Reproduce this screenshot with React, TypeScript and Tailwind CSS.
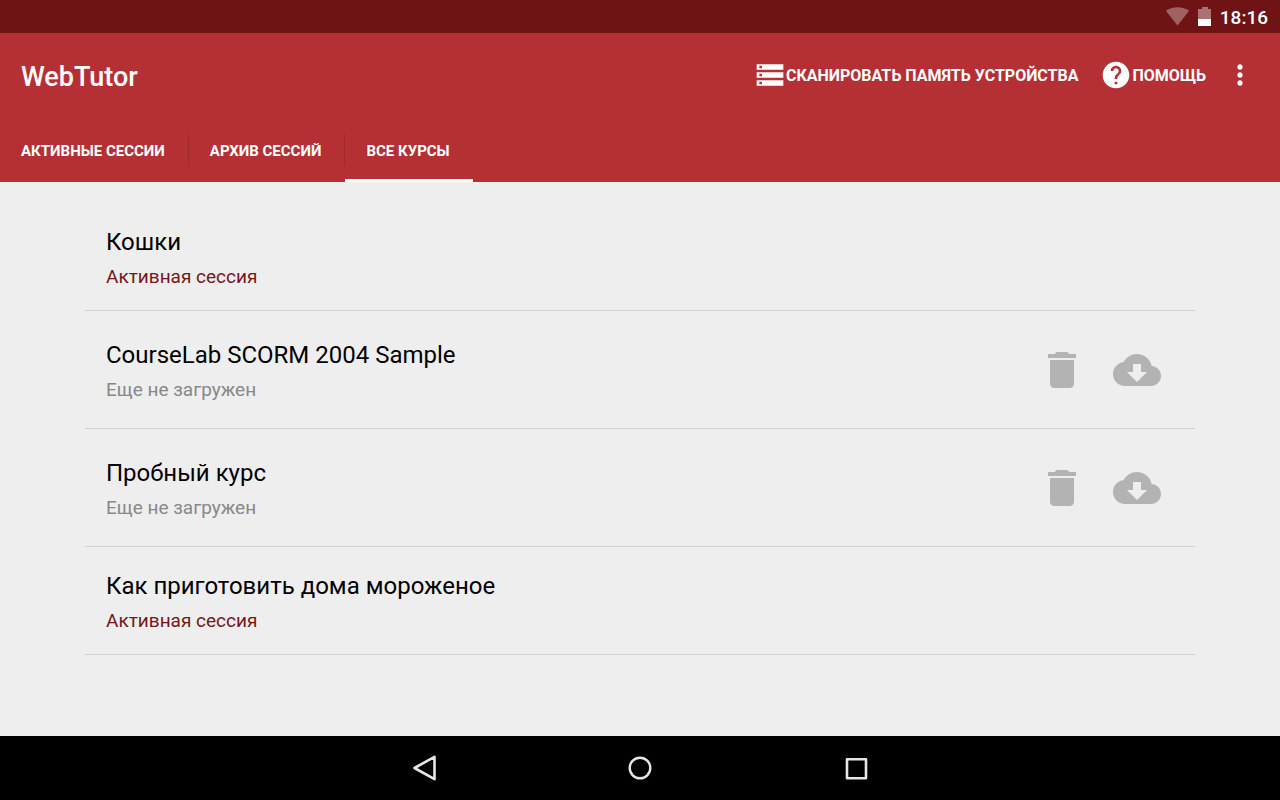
import { clsx } from "clsx"
import { useState } from "react"

type Course = {
  title: string
  status: "active" | "notLoaded"
}

const tabs = ["Активные сессии", "Архив сессий", "Все курсы"]

const courses: Course[] = [
  { title: "Кошки", status: "active" },
  { title: "CourseLab SCORM 2004 Sample", status: "notLoaded" },
  { title: "Пробный курс", status: "notLoaded" },
  { title: "Как приготовить дома мороженое", status: "active" },
]

const StatusBar = () => (
  <div className="flex h-[33px] items-center justify-end bg-[#701314] px-3 text-white">
    <svg viewBox="0 0 24 20" className="mr-2 h-5 w-6" fill="#a06162">
      <path d="M11.500 18.500 0 4C3 1.500 7 0.300 11.500 0.300s8.500 1.200 11.500 3.700z" />
    </svg>
    <svg viewBox="0 0 14 20" className="mr-2 h-5 w-3.5">
      <path d="M4 0h6v2h3v11H0V2h4z" fill="#a97172" />
      <path d="M0 12h13v7H0z" fill="#fff" />
    </svg>
    <span className="pt-0.5 text-[19px] leading-6 font-medium">18:16</span>
  </div>
)

const Toolbar = () => (
  <div className="flex h-[84px] items-center pr-6 pl-[21px]">
    <h1 className="grow pt-1 text-[27px] leading-9 font-medium">WebTutor</h1>

    <div className="flex items-center gap-[22px] text-base font-bold">
      <button type="button" className="flex items-center uppercase">
        <svg viewBox="0 0 24 24" className="size-8" fill="currentColor">
          <path d="M2 20h20v-4H2v4zm2-3h2v2H4v-2zM2 4v4h20V4H2zm4 3H4V5h2v2zm-4 7h20v-4H2v4zm2-3h2v2H4v-2z" />
        </svg>
        <span className="pt-0.5">Сканировать память устройства</span>
      </button>
      <button type="button" className="flex items-center uppercase">
        <svg viewBox="0 0 24 24" className="size-8" fill="currentColor">
          <path d="M12 2C6.480 2 2 6.480 2 12s4.480 10 10 10 10-4.480 10-10S17.520 2 12 2zm1 17h-2v-2h2v2zm2.070-7.750l-.9.920C13.450 12.900 13 13.500 13 15h-2v-.5c0-1.100.450-2.100 1.170-2.830l1.240-1.260c.370-.360.590-.860.590-1.410 0-1.100-.9-2-2-2s-2 .9-2 2H8c0-2.210 1.790-4 4-4s4 1.790 4 4c0 .880-.360 1.680-.930 2.250z" />
        </svg>
        <span className="pt-0.5">Помощь</span>
      </button>
    </div>

    <button type="button" aria-label="Ещё" className="ml-[18px]">
      <svg viewBox="0 0 24 24" className="size-8" fill="currentColor">
        <path d="M12 8c1.100 0 2-.9 2-2s-.9-2-2-2-2 .9-2 2 .9 2 2 2zm0 2c-1.100 0-2 .9-2 2s.9 2 2 2 2-.9 2-2-.9-2-2-2zm0 6c-1.100 0-2 .9-2 2s.9 2 2 2 2-.9 2-2-.9-2-2-2z" />
      </svg>
    </button>
  </div>
)

type TabBarProps = {
  current: number
  onSelect: (index: number) => void
}

const TabBar = (props: TabBarProps) => {
  const { current, onSelect: handleSelect } = props

  return (
    <nav className="flex h-[65px] items-center">
      {tabs.map((tab, index) => (
        <div key={tab} className="flex h-full items-center">
          {index > 0 && <span className="h-8 w-px bg-[#9f2a2e]" />}
          <button
            type="button"
            aria-pressed={index === current}
            className={clsx(
              "h-full border-b-3 pt-1.5 pr-[23px] pl-[21px] text-[15px] leading-6 font-bold uppercase",
              index === current ? "border-b-white" : "border-b-transparent"
            )}
            onClick={() => handleSelect(index)}
          >
            {tab}
          </button>
        </div>
      ))}
    </nav>
  )
}

const CourseRow = (props: Course) => {
  const { title, status } = props
  const isActive = status === "active"

  return (
    <li
      className={clsx(
        "flex items-center border-b border-[#d0d0d0] pr-[34px] pl-[21px]",
        isActive ? "h-[108px]" : "h-[118px]"
      )}
    >
      <div className="grow">
        <h2 className="text-2xl leading-10 text-black">{title}</h2>
        <p
          className={clsx(
            "text-[19px] leading-[30px]",
            isActive ? "text-[#761619]" : "text-[#888888]"
          )}
        >
          {isActive ? "Активная сессия" : "Еще не загружен"}
        </p>
      </div>

      {!isActive && (
        <div className="flex gap-[27px] text-[#b3b3b3]">
          <button type="button" aria-label="Удалить">
            <svg viewBox="0 0 24 24" className="size-12" fill="currentColor">
              <path d="M6 19c0 1.100.9 2 2 2h8c1.100 0 2-.9 2-2V7H6v12zM19 4h-3.100c-.3 0-.5-.2-.7-.5-.3-.4-.6-.5-1.200-.5h-4c-.6 0-.9.1-1.200.5-.2.3-.4.5-.7.5H5v2h14V4z" />
            </svg>
          </button>
          <button type="button" aria-label="Загрузить">
            <svg viewBox="0 0 24 24" className="size-12" fill="currentColor">
              <path d="M19.350 10.040C18.670 6.590 15.640 4 12 4 9.110 4 6.600 5.640 5.350 8.040 2.340 8.360 0 10.910 0 14c0 3.310 2.690 6 6 6h13c2.760 0 5-2.240 5-5 0-2.640-2.050-4.780-4.650-4.960zM17 13l-5 5-5-5h3V9h4v4h3z" />
            </svg>
          </button>
        </div>
      )}
    </li>
  )
}

const NavigationBar = () => (
  <div className="flex h-16 items-center justify-center bg-black">
    <button type="button" aria-label="Назад" className="flex w-54 justify-center">
      <svg viewBox="0 0 32 32" className="size-8" fill="none" stroke="#e6e6e6" strokeWidth="2.600" strokeLinejoin="round">
        <path d="M6.500 16 26.500 4.800v22.400z" />
      </svg>
    </button>
    <button type="button" aria-label="Домой" className="flex w-54 justify-center">
      <svg viewBox="0 0 32 32" className="size-8" fill="none" stroke="#e6e6e6" strokeWidth="2.400">
        <circle cx="16" cy="16" r="10.300" />
      </svg>
    </button>
    <button type="button" aria-label="Обзор" className="flex w-54 justify-center">
      <svg viewBox="0 0 32 32" className="size-8" fill="none" stroke="#e6e6e6" strokeWidth="2.600" strokeLinejoin="round">
        <path d="M7 7.200h19v19H7z" />
      </svg>
    </button>
  </div>
)

const App = () => {
  const [currentTab, setCurrentTab] = useState(2)

  return (
    <div className="flex min-h-screen flex-col bg-[#eeeeee] font-[Roboto,sans-serif]">
      <StatusBar />

      <header className="bg-[#b53035] text-white">
        <Toolbar />
        <TabBar current={currentTab} onSelect={setCurrentTab} />
      </header>

      <main className="grow px-[85px] py-[21px]">
        <ul>
          {courses.map((course) => (
            <CourseRow key={course.title} {...course} />
          ))}
        </ul>
      </main>

      <NavigationBar />
    </div>
  )
}

export default App
